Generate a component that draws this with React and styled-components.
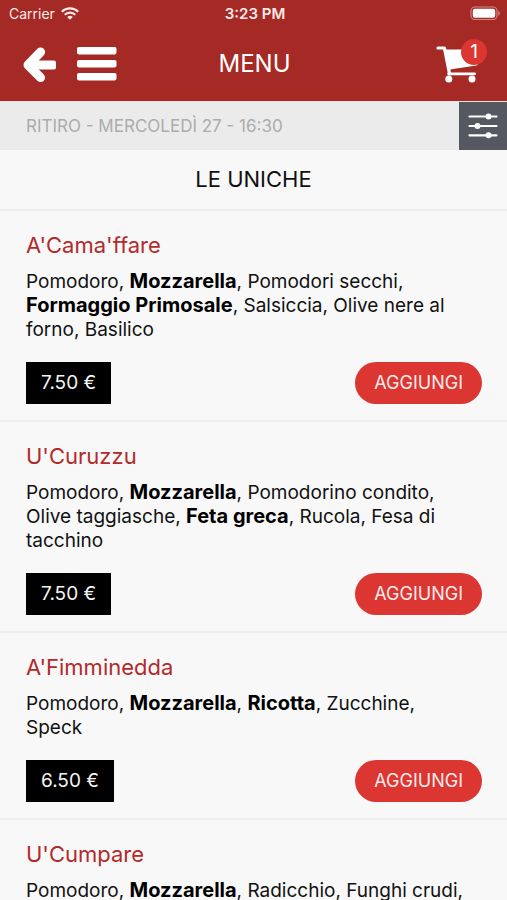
import React from "react";
import styled, { createGlobalStyle } from "styled-components";

const GlobalStyle = createGlobalStyle`
  *, *::before, *::after { box-sizing: border-box; }
  body {
    margin: 0;
    background: #f8f8f8;
    color: #111;
    font-family: Inter, "Liberation Sans", sans-serif;
  }
  h1, h2, h3, p { margin: 0; font-weight: 400; }
  button { border: 0; padding: 0; background: none; font: inherit; color: inherit; cursor: pointer; }
  svg { display: block; }
`;

const Screen = styled.div`
  display: flex;
  flex-direction: column;
  height: 100vh;
`;

const Header = styled.header`
  flex: none;
  background: #a52a25;
  color: #fff;
`;

const StatusBar = styled.div`
  display: grid;
  grid-template-columns: 1fr auto 1fr;
  align-items: center;
  height: 27px;
  padding: 0 6px 0 9px;
  font-size: 14px;
  color: #fbe9e8;
`;

const Carrier = styled.span`
  display: flex;
  align-items: center;
  gap: 6px;
`;

const Clock = styled.time`
  font-size: 15px;
  font-weight: 600;
`;

const BatterySlot = styled.span`
  justify-self: end;
`;

const NavBar = styled.nav`
  display: grid;
  grid-template-columns: 1fr auto 1fr;
  align-items: center;
  height: 74px;
  padding: 0 20px 0 22px;
`;

const NavGroup = styled.div`
  display: flex;
  align-items: center;
  gap: 20px;
`;

const PageTitle = styled.h1`
  font-size: 24px;
  line-height: 32px;
`;

const CartButton = styled.button`
  position: relative;
  justify-self: end;
  width: 51px;
  height: 50px;
`;

const CartBadge = styled.span`
  position: absolute;
  top: 0;
  right: 0;
  width: 26px;
  height: 26px;
  border-radius: 50%;
  background: #db3631;
  font-size: 19px;
  line-height: 26px;
  text-align: center;
`;

const PickupBar = styled.div`
  flex: none;
  display: flex;
  align-items: center;
  justify-content: space-between;
  border-top: 1px solid #f3dfde;
  padding-left: 26px;
  background: #ebebeb;
  color: #acacac;
  font-size: 17px;
`;

const FilterButton = styled.button`
  display: grid;
  place-items: center;
  width: 48px;
  height: 48px;
  background: #555860;
`;

const Catalogue = styled.main`
  flex: 1;
  min-height: 0;
  overflow-y: auto;
  scrollbar-width: none;
`;

const SectionTitle = styled.h2`
  padding: 13px 26px 14px;
  border-bottom: 2px solid #ededed;
  font-size: 22px;
  line-height: 32px;
  text-align: center;
`;

const Dish = styled.article`
  padding: 20px 25px 16px 26px;
  border-bottom: 2px solid #ededed;
`;

const DishName = styled.h3`
  font-size: 22px;
  line-height: 28px;
  color: #b22a2b;
`;

const Ingredients = styled.p`
  margin-top: 11px;
  padding-right: 12px;
  font-size: 19px;
  line-height: 24px;
`;

const Featured = styled.strong`
  font-size: 20px;
  font-weight: 700;
  line-height: 20px;
  color: #000;
`;

const DishFooter = styled.div`
  display: flex;
  align-items: center;
  justify-content: space-between;
  margin-top: 20px;
  line-height: 42px;
`;

const Price = styled.span`
  padding: 0 15px;
  background: #000;
  color: #f4f4f4;
  font-size: 19px;
`;

const AddButton = styled.button`
  height: 42px;
  padding: 0 19px;
  border-radius: 21px;
  background: #db3631;
  color: #fdeceb;
  font-size: 18px;
`;

const WifiIcon = () => (
  <svg width="18" height="13" viewBox="0 0 18 13" fill="none" stroke="currentColor" strokeWidth="2.1" aria-hidden="true">
    <path d="M0.8 4.8a11.6 11.6 0 0 1 16.4 0" />
    <path d="M3.7 7.8a7.5 7.5 0 0 1 10.6 0" />
    <path d="M9 12.8 6.2 10a4 4 0 0 1 5.6 0Z" fill="currentColor" stroke="none" />
  </svg>
);

const BatteryIcon = () => (
  <svg width="31" height="15" viewBox="0 0 31 15" aria-hidden="true">
    <rect x="1" y="1" width="26" height="12.5" rx="4" fill="none" stroke="#d08a86" strokeWidth="1.1" />
    <rect x="2.8" y="2.7" width="22.4" height="9.1" rx="2.3" fill="#fff" />
    <path d="M28.3 4.8c2 .9 2 4 0 4.9Z" fill="#d08a86" />
  </svg>
);

const BackIcon = () => (
  <svg width="35" height="37" viewBox="0 0 35 37" aria-hidden="true">
    <path d="M18.6 6 6 19l12.6 12.6" fill="none" stroke="currentColor" strokeWidth="9" strokeLinecap="round" strokeLinejoin="round" />
    <rect x="6" y="14.6" width="28" height="8.8" rx="2" fill="currentColor" />
  </svg>
);

const MenuIcon = () => (
  <svg width="40" height="35" viewBox="0 0 40 35" fill="currentColor" aria-hidden="true">
    <rect y="0" width="39.5" height="7.4" rx="1.8" />
    <rect y="13" width="39.5" height="7.4" rx="1.8" />
    <rect y="26" width="39.5" height="7.4" rx="1.8" />
  </svg>
);

const CartIcon = () => (
  <svg width="51" height="50" viewBox="0 0 51 50" fill="currentColor" aria-hidden="true">
    <path d="M2 9h6.4L13.6 35" fill="none" stroke="currentColor" strokeWidth="3.2" strokeLinecap="round" strokeLinejoin="round" />
    <path d="M8.5 10.5H42V24.6c0 1-.6 1.7-1.7 1.9L15.4 30.3l-3 1Z" />
    <path d="M12.6 34.8H38.6" fill="none" stroke="currentColor" strokeWidth="2.8" strokeLinecap="round" />
    <circle cx="12.8" cy="39.9" r="3.5" />
    <circle cx="36" cy="39.9" r="3.5" />
  </svg>
);

const SlidersIcon = () => (
  <svg width="30" height="27" viewBox="0 0 30 27" fill="#fff" aria-hidden="true">
    <path d="M1.5 3.5h27M1.5 13h27M1.5 22.3h27" stroke="#fff" strokeWidth="2.2" strokeLinecap="round" />
    <circle cx="20.5" cy="3.5" r="3" />
    <circle cx="9.5" cy="13" r="3" />
    <circle cx="20.5" cy="22.3" r="3" />
  </svg>
);

// Ingredients between asterisks are the featured ones.
const dishes = [
  {
    name: "A'Cama'ffare",
    ingredients: "Pomodoro, *Mozzarella*, Pomodori secchi, *Formaggio Primosale*, Salsiccia, Olive nere al forno, Basilico",
    price: "7.50 €",
  },
  {
    name: "U'Curuzzu",
    ingredients: "Pomodoro, *Mozzarella*, Pomodorino condito, Olive taggiasche, *Feta greca*, Rucola, Fesa di tacchino",
    price: "7.50 €",
  },
  {
    name: "A'Fimminedda",
    ingredients: "Pomodoro, *Mozzarella*, *Ricotta*, Zucchine, Speck",
    price: "6.50 €",
  },
  {
    name: "U'Cumpare",
    ingredients: "Pomodoro, *Mozzarella*, Radicchio, Funghi crudi,",
  },
];

function DishCard({ name, ingredients, price }) {
  return (
    <Dish>
      <DishName>{name}</DishName>
      <Ingredients>
        {ingredients.split("*").map((part, i) =>
          i % 2 ? <Featured key={i}>{part}</Featured> : part
        )}
      </Ingredients>
      {price && (
        <DishFooter>
          <Price>{price}</Price>
          <AddButton type="button">AGGIUNGI</AddButton>
        </DishFooter>
      )}
    </Dish>
  );
}

export default function App() {
  return (
    <Screen>
      <GlobalStyle />
      <Header>
        <StatusBar>
          <Carrier>Carrier <WifiIcon /></Carrier>
          <Clock>3:23 PM</Clock>
          <BatterySlot><BatteryIcon /></BatterySlot>
        </StatusBar>
        <NavBar>
          <NavGroup>
            <button type="button" aria-label="Indietro"><BackIcon /></button>
            <button type="button" aria-label="Apri menu"><MenuIcon /></button>
          </NavGroup>
          <PageTitle>MENU</PageTitle>
          <CartButton type="button" aria-label="Carrello">
            <CartIcon />
            <CartBadge>1</CartBadge>
          </CartButton>
        </NavBar>
      </Header>
      <PickupBar>
        <span>RITIRO - MERCOLEDÌ 27 - 16:30</span>
        <FilterButton type="button" aria-label="Filtri"><SlidersIcon /></FilterButton>
      </PickupBar>
      <Catalogue>
        <SectionTitle>LE UNICHE</SectionTitle>
        {dishes.map((dish) => (
          <DishCard key={dish.name} {...dish} />
        ))}
      </Catalogue>
    </Screen>
  );
}
